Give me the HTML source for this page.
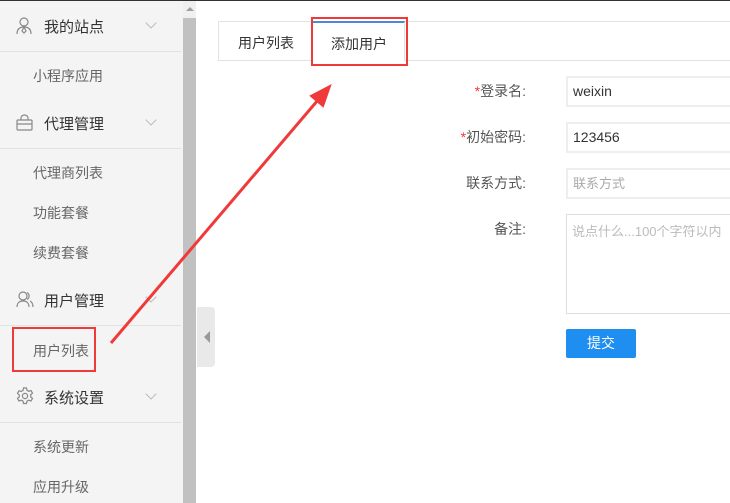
<!DOCTYPE html>
<html><head><meta charset="utf-8"><style>
*{margin:0;padding:0;box-sizing:border-box}
body{width:730px;height:503px;overflow:hidden;background:#fff;font-family:"Liberation Sans","Noto Sans CJK SC",sans-serif;position:relative}
.topline{position:absolute;left:0;top:0;width:730px;height:1px;background:#333}
.side{position:absolute;left:0;top:1px;width:183px;height:502px;background:#f4f4f4}
.h{position:absolute;left:0;width:183px;font-size:15px;color:#333}
.h span{position:absolute;left:44px}
.div{position:absolute;left:0;width:181px;height:1px;background:#e2e2e2}
.s{position:absolute;left:33px;font-size:14px;color:#666}
.chev{position:absolute;left:147px;width:8px;height:8px;border-right:1px solid #bbb;border-bottom:1px solid #bbb;transform:rotate(45deg)}
.ic{position:absolute;left:16px}
.sb{position:absolute;left:183px;top:1px;width:13px;height:502px;background:#f0f0f0}
.thumb{position:absolute;left:183px;top:18px;width:13px;height:485px;background:#c1c1c1}
.tab{position:absolute;font-size:14px;color:#333}
.lbl{position:absolute;right:204px;font-size:14px;color:#555;text-align:right}
.lbl b{color:#f33;font-weight:normal}
.inp{position:absolute;left:566px;width:180px;border:2px solid #eee;font-size:14px;color:#333;padding-left:5px}
</style></head><body>
<div class="topline"></div>
<div class="side">
</div>
<div class="h" style="top:16px"><svg class="ic" style="top:1px" width="16" height="18" viewBox="0 0 16 18" fill="none" stroke="#888" stroke-width="1.2"><circle cx="8" cy="5" r="4"/><path d="M1 17c0-5 3-7 7-7s7 2 7 7M8 10l-2 4 2 2 2-2z"/></svg><span>我的站点</span></div>
<div class="chev" style="top:19px"></div>
<div class="div" style="top:51px"></div>
<div class="s" style="top:66px">小程序应用</div>
<div class="h" style="top:113px"><svg class="ic" style="top:1px" width="17" height="17" viewBox="0 0 17 17" fill="none" stroke="#888" stroke-width="1.2"><rect x="1" y="6" width="15" height="10" rx="1"/><path d="M5 6V4a3.5 3 0 0 1 7 0v2M1 10h15"/></svg><span>代理管理</span></div>
<div class="chev" style="top:116px"></div>
<div class="div" style="top:148px"></div>
<div class="s" style="top:163px">代理商列表</div>
<div class="s" style="top:203px">功能套餐</div>
<div class="s" style="top:243px">续费套餐</div>
<div class="h" style="top:290px"><svg class="ic" style="top:1px" width="18" height="17" viewBox="0 0 18 17" fill="none" stroke="#888" stroke-width="1.2"><circle cx="7" cy="5" r="4"/><path d="M1 16c0-4 2.5-6 6-6s6 2 6 6M11 1.5a4 4 0 0 1 0 7M14 10c2 1 3 3 3 6"/></svg><span>用户管理</span></div>
<div class="chev" style="top:293px"></div>
<div class="div" style="top:325px"></div>
<div class="s" style="top:341px">用户列表</div>
<div class="h" style="top:387px"><svg class="ic" style="top:0" width="18" height="18" viewBox="0 0 18 18" fill="none" stroke="#888" stroke-width="1.2"><path d="M7.5 1h3l.5 2.3 1.8 1 2.2-.8 1.5 2.6-1.8 1.6v2.1l1.8 1.6-1.5 2.6-2.2-.8-1.8 1-.5 2.3h-3l-.5-2.3-1.8-1-2.2.8-1.5-2.6 1.8-1.6V8L1.5 6.3 3 3.7l2.2.8 1.8-1z"/><circle cx="9" cy="9" r="2.6"/></svg><span>系统设置</span></div>
<div class="chev" style="top:390px"></div>
<div class="div" style="top:422px"></div>
<div class="s" style="top:437px">系统更新</div>
<div class="s" style="top:477px">应用升级</div>
<div class="sb"></div>
<div style="position:absolute;left:186px;top:7px;width:0;height:0;border-left:4px solid transparent;border-right:4px solid transparent;border-bottom:4px solid #a0a0a0"></div>
<div class="thumb"></div>
<div style="position:absolute;left:197px;top:307px;width:18px;height:60px;background:#e9e9e9;border-radius:0 4px 4px 0"></div>
<div style="position:absolute;left:204px;top:331px;width:0;height:0;border-top:6px solid transparent;border-bottom:6px solid transparent;border-right:6px solid #999"></div>
<!-- tabs -->
<div style="position:absolute;left:218px;top:21px;width:520px;height:40px;border:1px solid #e2e2e2;border-right:none"></div>
<div style="position:absolute;left:311px;top:21px;width:94px;height:40px;background:#fff;border-left:1px solid #e2e2e2;border-right:1px solid #e2e2e2;border-top:2px solid #4a8bd6"></div>
<div class="tab" style="left:238px;top:33px">用户列表</div>
<div class="tab" style="left:331px;top:34px">添加用户</div>
<div style="position:absolute;left:311px;top:17px;width:97px;height:49px;border:2px solid #f03a3a"></div>
<!-- form -->
<div class="lbl" style="top:81px"><b>*</b>登录名:</div>
<div class="lbl" style="top:127px"><b>*</b>初始密码:</div>
<div class="lbl" style="top:173px">联系方式:</div>
<div class="lbl" style="top:219px">备注:</div>
<div class="inp" style="top:76px;height:31px;line-height:27px">weixin</div>
<div class="inp" style="top:122px;height:31px;line-height:27px">123456</div>
<div class="inp" style="top:168px;height:31px;line-height:27px;color:#aaa;font-size:13px">联系方式</div>
<div class="inp" style="top:214px;height:100px;border-width:1px;border-color:#ddd;color:#bbb;font-size:13px;padding-top:6px;white-space:nowrap;overflow:hidden">说点什么...100个字符以内</div>
<div style="position:absolute;left:566px;top:329px;width:70px;height:29px;background:#1e8ff0;border-radius:2px;color:#fff;font-size:14px;text-align:center;line-height:29px">提交</div>
<!-- annotations -->
<div style="position:absolute;left:12px;top:327px;width:84px;height:45px;border:2px solid #f03a3a"></div>
<svg style="position:absolute;left:0;top:0" width="730" height="503"><line x1="111" y1="343" x2="318" y2="100" stroke="#f03a3a" stroke-width="3"/><polygon points="330,86 311,96 323,106" fill="#f03a3a" stroke="#f03a3a" stroke-width="2"/></svg>
</body></html>
